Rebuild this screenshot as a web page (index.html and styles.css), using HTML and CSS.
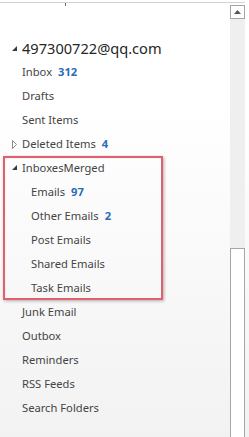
FILE: index.html
```html
<!DOCTYPE html>
<html>
<head>
<meta charset="utf-8">
<link rel="stylesheet" href="styles.css">
</head>
<body>
<div class="frame">
  <div class="topline"></div>
  <div class="main">
    <div class="tree">
      <div class="cut"><span class="cut-mark"></span></div>
      <div class="account">
        <span class="toggle"><svg width="5" height="5" viewBox="0 0 5 5"><polygon points="5,0 5,5 0,5" fill="#3a3a3a"/></svg></span>
        <span class="account-name">497300722@qq.com</span>
      </div>
      <div class="row l1"><span class="name">Inbox</span><span class="count">312</span></div>
      <div class="row l1"><span class="name">Drafts</span></div>
      <div class="row l1"><span class="name">Sent Items</span></div>
      <div class="row l0">
        <span class="toggle"><svg width="5" height="9" viewBox="0 0 5 9"><polygon points="0.5,0.5 4.5,4.5 0.5,8.5" fill="none" stroke="#8a8a8a" stroke-width="1"/></svg></span>
        <span class="name">Deleted Items</span><span class="count">4</span>
      </div>
      <div class="group">
        <div class="row g0">
          <span class="toggle"><svg width="5" height="5" viewBox="0 0 5 5"><polygon points="5,0 5,5 0,5" fill="#3a3a3a"/></svg></span>
          <span class="name">InboxesMerged</span>
        </div>
        <div class="row g1"><span class="name">Emails</span><span class="count">97</span></div>
        <div class="row g1"><span class="name">Other Emails</span><span class="count">2</span></div>
        <div class="row g1"><span class="name">Post Emails</span></div>
        <div class="row g1"><span class="name">Shared Emails</span></div>
        <div class="row g1"><span class="name">Task Emails</span></div>
      </div>
      <div class="row l1"><span class="name">Junk Email</span></div>
      <div class="row l1"><span class="name">Outbox</span></div>
      <div class="row l1"><span class="name">Reminders</span></div>
      <div class="row l1"><span class="name">RSS Feeds</span></div>
      <div class="row l1"><span class="name">Search Folders</span></div>
    </div>
    <div class="scrollbar">
      <div class="sb-up"><svg width="7" height="4" viewBox="0 0 7 4"><polygon points="3.5,0 7,4 0,4" fill="#555"/></svg></div>
      <div class="sb-track"></div>
      <div class="sb-thumb"></div>
    </div>
  </div>
</div>
</body>
</html>
```
FILE: styles.css
```css
html, body {
  margin: 0;
  padding: 0;
}
body {
  width: 249px;
  height: 437px;
  overflow: hidden;
  font-family: "Noto Sans", "Open Sans", sans-serif;
  background: linear-gradient(#ffffff 0px, #ffffff 110px, #f2f2f2 437px);
}
.frame {
  padding-top: 2px;
  height: 435px;
  display: flex;
  flex-direction: column;
}
.topline {
  height: 1px;
  width: 245px;
  background: #d2d2d2;
}
.main {
  flex: 1;
  display: flex;
  padding-right: 4px;
}
.tree {
  width: 230px;
}
.cut {
  height: 31px;
}
.cut-mark {
  display: block;
  width: 1px;
  height: 3px;
  margin-left: 65px;
  background: #666;
}
.account {
  height: 26px;
  display: flex;
  align-items: center;
}
.toggle {
  width: 10px;
  display: flex;
  align-items: center;
}
.account .toggle {
  margin-left: 12px;
  margin-top: 3px;
}
.account-name {
  font-size: 14.6px;
  color: #262626;
  margin-top: 1px;
}
.row {
  height: 24px;
  box-sizing: border-box;
  padding-bottom: 2px;
  display: flex;
  align-items: center;
  font-size: 11.2px;
  color: #444;
}
.row.l1 { padding-left: 22px; }
.row.l0 { padding-left: 12px; }
.row.l0 .toggle { margin-top: 2px; }
.count {
  margin-left: 6px;
  font-weight: bold;
  color: #2b6cb6;
}
.group {
  margin-left: 3px;
  width: 160px;
  outline: 2px solid #e2606e;
  outline-offset: -2px;
  box-shadow: 1px 1px 3px rgba(0,0,0,0.3), inset 1px 1px 3px rgba(0,0,0,0.18);
}
.row.g0 { padding-left: 9px; }
.row.g0 .toggle { margin-top: 1px; }
.row.g1 { padding-left: 28px; }
.scrollbar {
  width: 15px;
  display: flex;
  flex-direction: column;
  padding-top: 2px;
}
.sb-up {
  height: 14px;
  box-sizing: border-box;
  border: 1px solid #a6a6a6;
  background: #fff;
  display: flex;
  align-items: center;
  justify-content: center;
}
.sb-track {
  height: 229px;
  background: #efefef;
}
.sb-thumb {
  flex: 1;
  box-sizing: border-box;
  border: 1px solid #a6a6a6;
  border-bottom: none;
  background: #fff;
}
```
